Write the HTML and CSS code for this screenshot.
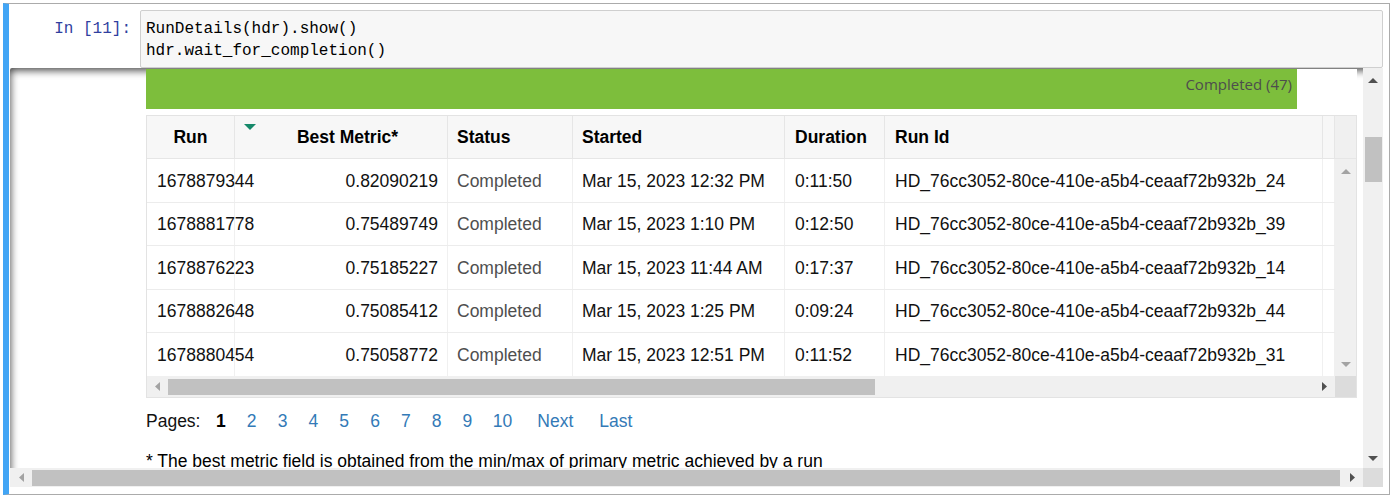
FILE: index.html
```html
<!DOCTYPE html>
<html>
<head>
<meta charset="utf-8">
<title>Notebook cell</title>
<link rel="stylesheet" href="styles.css">
</head>
<body>
<div class="cell">
  <div class="input">
    <div class="prompt">In&nbsp;[11]:</div>
    <div class="input-area"><pre class="code">RunDetails(hdr).show()
hdr.wait_for_completion()</pre></div>
  </div>
  <div class="output">
    <div class="viewport">
      <div class="widget">
        <div class="progress"><span>Completed (47)</span></div>
        <div class="grid-box">
          <div class="thead">
            <div class="th c-run center">Run</div>
            <div class="th c-metric center sorted"><span class="sort-arrow"></span>Best Metric*</div>
            <div class="th c-status">Status</div>
            <div class="th c-started">Started</div>
            <div class="th c-duration">Duration</div>
            <div class="th c-id">Run Id</div>
            <div class="th c-fill"></div>
          </div>
          <div class="th-gap"></div>
          <div class="tbody">
            <div class="tr">
              <div class="td c-run">1678879344</div>
              <div class="td c-metric right">0.82090219</div>
              <div class="td c-status status">Completed</div>
              <div class="td c-started">Mar 15, 2023 12:32 PM</div>
              <div class="td c-duration">0:11:50</div>
              <div class="td c-id">HD_76cc3052-80ce-410e-a5b4-ceaaf72b932b_24</div>
              <div class="td c-fill"></div>
            </div>
            <div class="tr">
              <div class="td c-run">1678881778</div>
              <div class="td c-metric right">0.75489749</div>
              <div class="td c-status status">Completed</div>
              <div class="td c-started">Mar 15, 2023 1:10 PM</div>
              <div class="td c-duration">0:12:50</div>
              <div class="td c-id">HD_76cc3052-80ce-410e-a5b4-ceaaf72b932b_39</div>
              <div class="td c-fill"></div>
            </div>
            <div class="tr">
              <div class="td c-run">1678876223</div>
              <div class="td c-metric right">0.75185227</div>
              <div class="td c-status status">Completed</div>
              <div class="td c-started">Mar 15, 2023 11:44 AM</div>
              <div class="td c-duration">0:17:37</div>
              <div class="td c-id">HD_76cc3052-80ce-410e-a5b4-ceaaf72b932b_14</div>
              <div class="td c-fill"></div>
            </div>
            <div class="tr">
              <div class="td c-run">1678882648</div>
              <div class="td c-metric right">0.75085412</div>
              <div class="td c-status status">Completed</div>
              <div class="td c-started">Mar 15, 2023 1:25 PM</div>
              <div class="td c-duration">0:09:24</div>
              <div class="td c-id">HD_76cc3052-80ce-410e-a5b4-ceaaf72b932b_44</div>
              <div class="td c-fill"></div>
            </div>
            <div class="tr">
              <div class="td c-run">1678880454</div>
              <div class="td c-metric right">0.75058772</div>
              <div class="td c-status status">Completed</div>
              <div class="td c-started">Mar 15, 2023 12:51 PM</div>
              <div class="td c-duration">0:11:52</div>
              <div class="td c-id">HD_76cc3052-80ce-410e-a5b4-ceaaf72b932b_31</div>
              <div class="td c-fill"></div>
            </div>
          </div>
          <div class="t-vscroll">
            <div class="t-btn"><svg width="10" height="5" viewBox="0 0 10 5"><path d="M0 5L5 0L10 5Z" fill="#a3a3a3"/></svg></div>
            <div class="t-btn"><svg width="10" height="5" viewBox="0 0 10 5"><path d="M0 0L5 5L10 0Z" fill="#a3a3a3"/></svg></div>
          </div>
          <div class="t-hscroll">
            <div class="t-hbtn"><svg width="5" height="9" viewBox="0 0 5 9"><path d="M5 0L0 4.5L5 9Z" fill="#a3a3a3"/></svg></div>
            <div class="t-hthumb-track"><div class="t-hthumb"></div></div>
            <div class="t-hbtn"><svg width="5" height="9" viewBox="0 0 5 9"><path d="M0 0L5 4.5L0 9Z" fill="#505050"/></svg></div>
          </div>
          <div class="t-corner"></div>
        </div>
        <div class="pager">
          <span>Pages:</span>
          <span class="pg-cur">1</span>
          <a class="pg">2</a>
          <a class="pg">3</a>
          <a class="pg">4</a>
          <a class="pg">5</a>
          <a class="pg">6</a>
          <a class="pg">7</a>
          <a class="pg">8</a>
          <a class="pg">9</a>
          <a class="pg pg-ten">10</a>
          <a class="pg pg-next">Next</a>
          <a class="pg pg-last">Last</a>
        </div>
        <div class="footnote">* The best metric field is obtained from the min/max of primary metric achieved by a run</div>
      </div>
    </div>
    <div class="o-vscroll">
      <div class="o-vbtn"><svg width="10" height="5" viewBox="0 0 10 5"><path d="M0 5L5 0L10 5Z" fill="#505050"/></svg></div>
      <div class="o-vtrack"><div class="o-vthumb"></div></div>
      <div class="o-vbtn"><svg width="10" height="5" viewBox="0 0 10 5"><path d="M0 0L5 5L10 0Z" fill="#505050"/></svg></div>
    </div>
    <div class="o-hscroll">
      <div class="o-hbtn"><svg width="5" height="9" viewBox="0 0 5 9"><path d="M5 0L0 4.5L5 9Z" fill="#a3a3a3"/></svg></div>
      <div class="o-htrack"><div class="o-hthumb"></div></div>
      <div class="o-hbtn"><svg width="5" height="9" viewBox="0 0 5 9"><path d="M0 0L5 4.5L0 9Z" fill="#505050"/></svg></div>
    </div>
    <div class="o-corner"></div>
  </div>
</div>
</body>
</html>
```

FILE: styles.css
```css
* { box-sizing: border-box; }
html, body { margin: 0; padding: 0; background: #fff; }
body { width: 1392px; height: 496px; overflow: hidden; }

.cell {
  margin: 3px 0 0 3px;
  width: 1387px;
  height: 492px;
  border: 1px solid #ababab;
  border-left: 6px solid #42a5f5;
  padding: 6px 6px 7px 1px;
  display: flex;
  flex-direction: column;
}

/* input */
.input { display: flex; height: 58px; flex: none; }
.prompt {
  width: 130px;
  flex: none;
  padding: 8px 9px 0 0;
  text-align: right;
  font: 16px/22px "Liberation Mono", "DejaVu Sans Mono", monospace;
  color: #303f9f;
}
.input-area {
  flex: 1;
  border: 1px solid #cfcfcf;
  border-radius: 2px;
  background: #f7f7f7;
  padding: 7px 5px 5px 5px;
}
.code {
  margin: 0;
  font: 16px/22px "Liberation Mono", "DejaVu Sans Mono", monospace;
  color: #000;
}

/* output scroll area */
.output {
  height: 419px;
  flex: none;
  display: grid;
  grid-template-columns: 1353px 20px;
  grid-template-rows: 400px 19px;
  box-shadow: inset 0 2px 8px rgba(0, 0, 0, 0.8);
  border-radius: 2px;
}
.viewport {
  overflow: hidden;
  padding: 1px 0 0 136px;
}
.widget {
  width: 1211px;
  height: 600px;
  background: #fff;
  font: 17.5px/24px "Liberation Sans", Arial, sans-serif;
  color: #111;
}
.progress {
  width: 1151px;
  height: 40px;
  background: #7dbe3c;
  display: flex;
  justify-content: flex-end;
  padding: 5px 5px 0 0;
  font: 15px/20px "Open Sans", "Noto Sans", sans-serif;
  color: #4d4d4d;
}

/* table widget */
.grid-box {
  margin-top: 6px;
  width: 1211px;
  height: 283px;
  border: 1px solid #e3e3e3;
  display: grid;
  grid-template-columns: 1188px 21px;
  grid-template-rows: 43px 217px 21px;
}
.thead { display: flex; }
.th {
  height: 43px;
  background: #f7f7f7;
  border-right: 1px solid #e6e6e6;
  border-bottom: 1px solid #e6e6e6;
  padding: 9px 10px;
  font-weight: bold;
  color: #000;
  white-space: nowrap;
}
.th.center { text-align: center; }
.th.sorted { position: relative; padding-left: 23px; }
.sort-arrow {
  position: absolute;
  left: 9px;
  top: 8px;
  width: 0;
  height: 0;
  border-left: 6px solid transparent;
  border-right: 6px solid transparent;
  border-top: 6px solid #16896a;
}
.th-gap {
  background: #f0f0f0;
  border-bottom: 1px solid #e6e6e6;
}
.th.c-status, .th.c-started { padding-left: 9px; }
.c-run { width: 88px; }
.c-metric { width: 213px; }
.c-status { width: 125px; }
.c-started { width: 212px; }
.c-duration { width: 100px; }
.c-id { width: 438px; }
.c-fill { width: 12px; }
.th.c-fill { padding: 0; }

.tbody { display: flex; flex-direction: column; overflow: hidden; }
.tr {
  display: flex;
  height: 43.5px;
  flex: none;
  border-bottom: 1px solid #ececec;
}
.td {
  display: flex;
  align-items: center;
  border-right: 1px solid #f0f0f0;
  padding: 1px 9px 0 9px;
  white-space: nowrap;
  color: #111;
}
.td.c-run { padding-left: 10px; }
.td.right { justify-content: flex-end; }
.td.status { color: #4f4f4f; }
.td.c-duration, .td.c-id { padding-left: 10px; }
.td.c-fill { padding: 0; }

.t-vscroll {
  background: #f0f0f0;
  display: flex;
  flex-direction: column;
  justify-content: space-between;
}
.t-btn {
  height: 23px;
  display: flex;
  align-items: center;
  justify-content: center;
}
.t-btn:first-child { height: 24px; }
.t-hscroll {
  background: #f0f0f0;
  display: flex;
  height: 21px;
}
.t-hbtn {
  width: 21px;
  flex: none;
  display: flex;
  align-items: center;
  justify-content: center;
}
.t-hthumb-track { flex: 1; padding: 3px 0 2px 0; }
.t-hthumb { width: 707px; height: 16px; background: #c1c1c1; }
.t-corner { background: #dcdcdc; }

/* pagination */
.pager {
  margin-top: 11px;
  display: flex;
  align-items: baseline;
  height: 24px;
}
.pg-cur { margin-left: 15.5px; font-weight: bold; color: #000; }
.pg { margin-left: 21.1px; color: #337ab7; text-decoration: none; }
.pg-ten { margin-left: 20.5px; }
.pg-next { margin-left: 25px; }
.pg-last { margin-left: 26px; }
.footnote { margin-top: 16px; color: #000; white-space: nowrap; }

/* output scrollbars */
.o-vscroll {
  background: #f0f0f0;
  display: flex;
  flex-direction: column;
  padding-top: 1px;
}
.o-vbtn {
  height: 20px;
  flex: none;
  display: flex;
  align-items: center;
  justify-content: center;
}
.o-vbtn:first-child { height: 22px; }
.o-vtrack { flex: 1; padding: 46px 1px 0 2px; }
.o-vthumb { height: 45px; background: #c1c1c1; }
.o-hscroll {
  background: #f0f0f0;
  display: flex;
}
.o-hbtn {
  width: 22px;
  flex: none;
  display: flex;
  align-items: center;
  justify-content: center;
}
.o-htrack { flex: 1; padding: 2px 0 1px 0; }
.o-hthumb { width: 1308px; height: 16px; background: #c1c1c1; }
.o-corner { background: #dcdcdc; }
```
